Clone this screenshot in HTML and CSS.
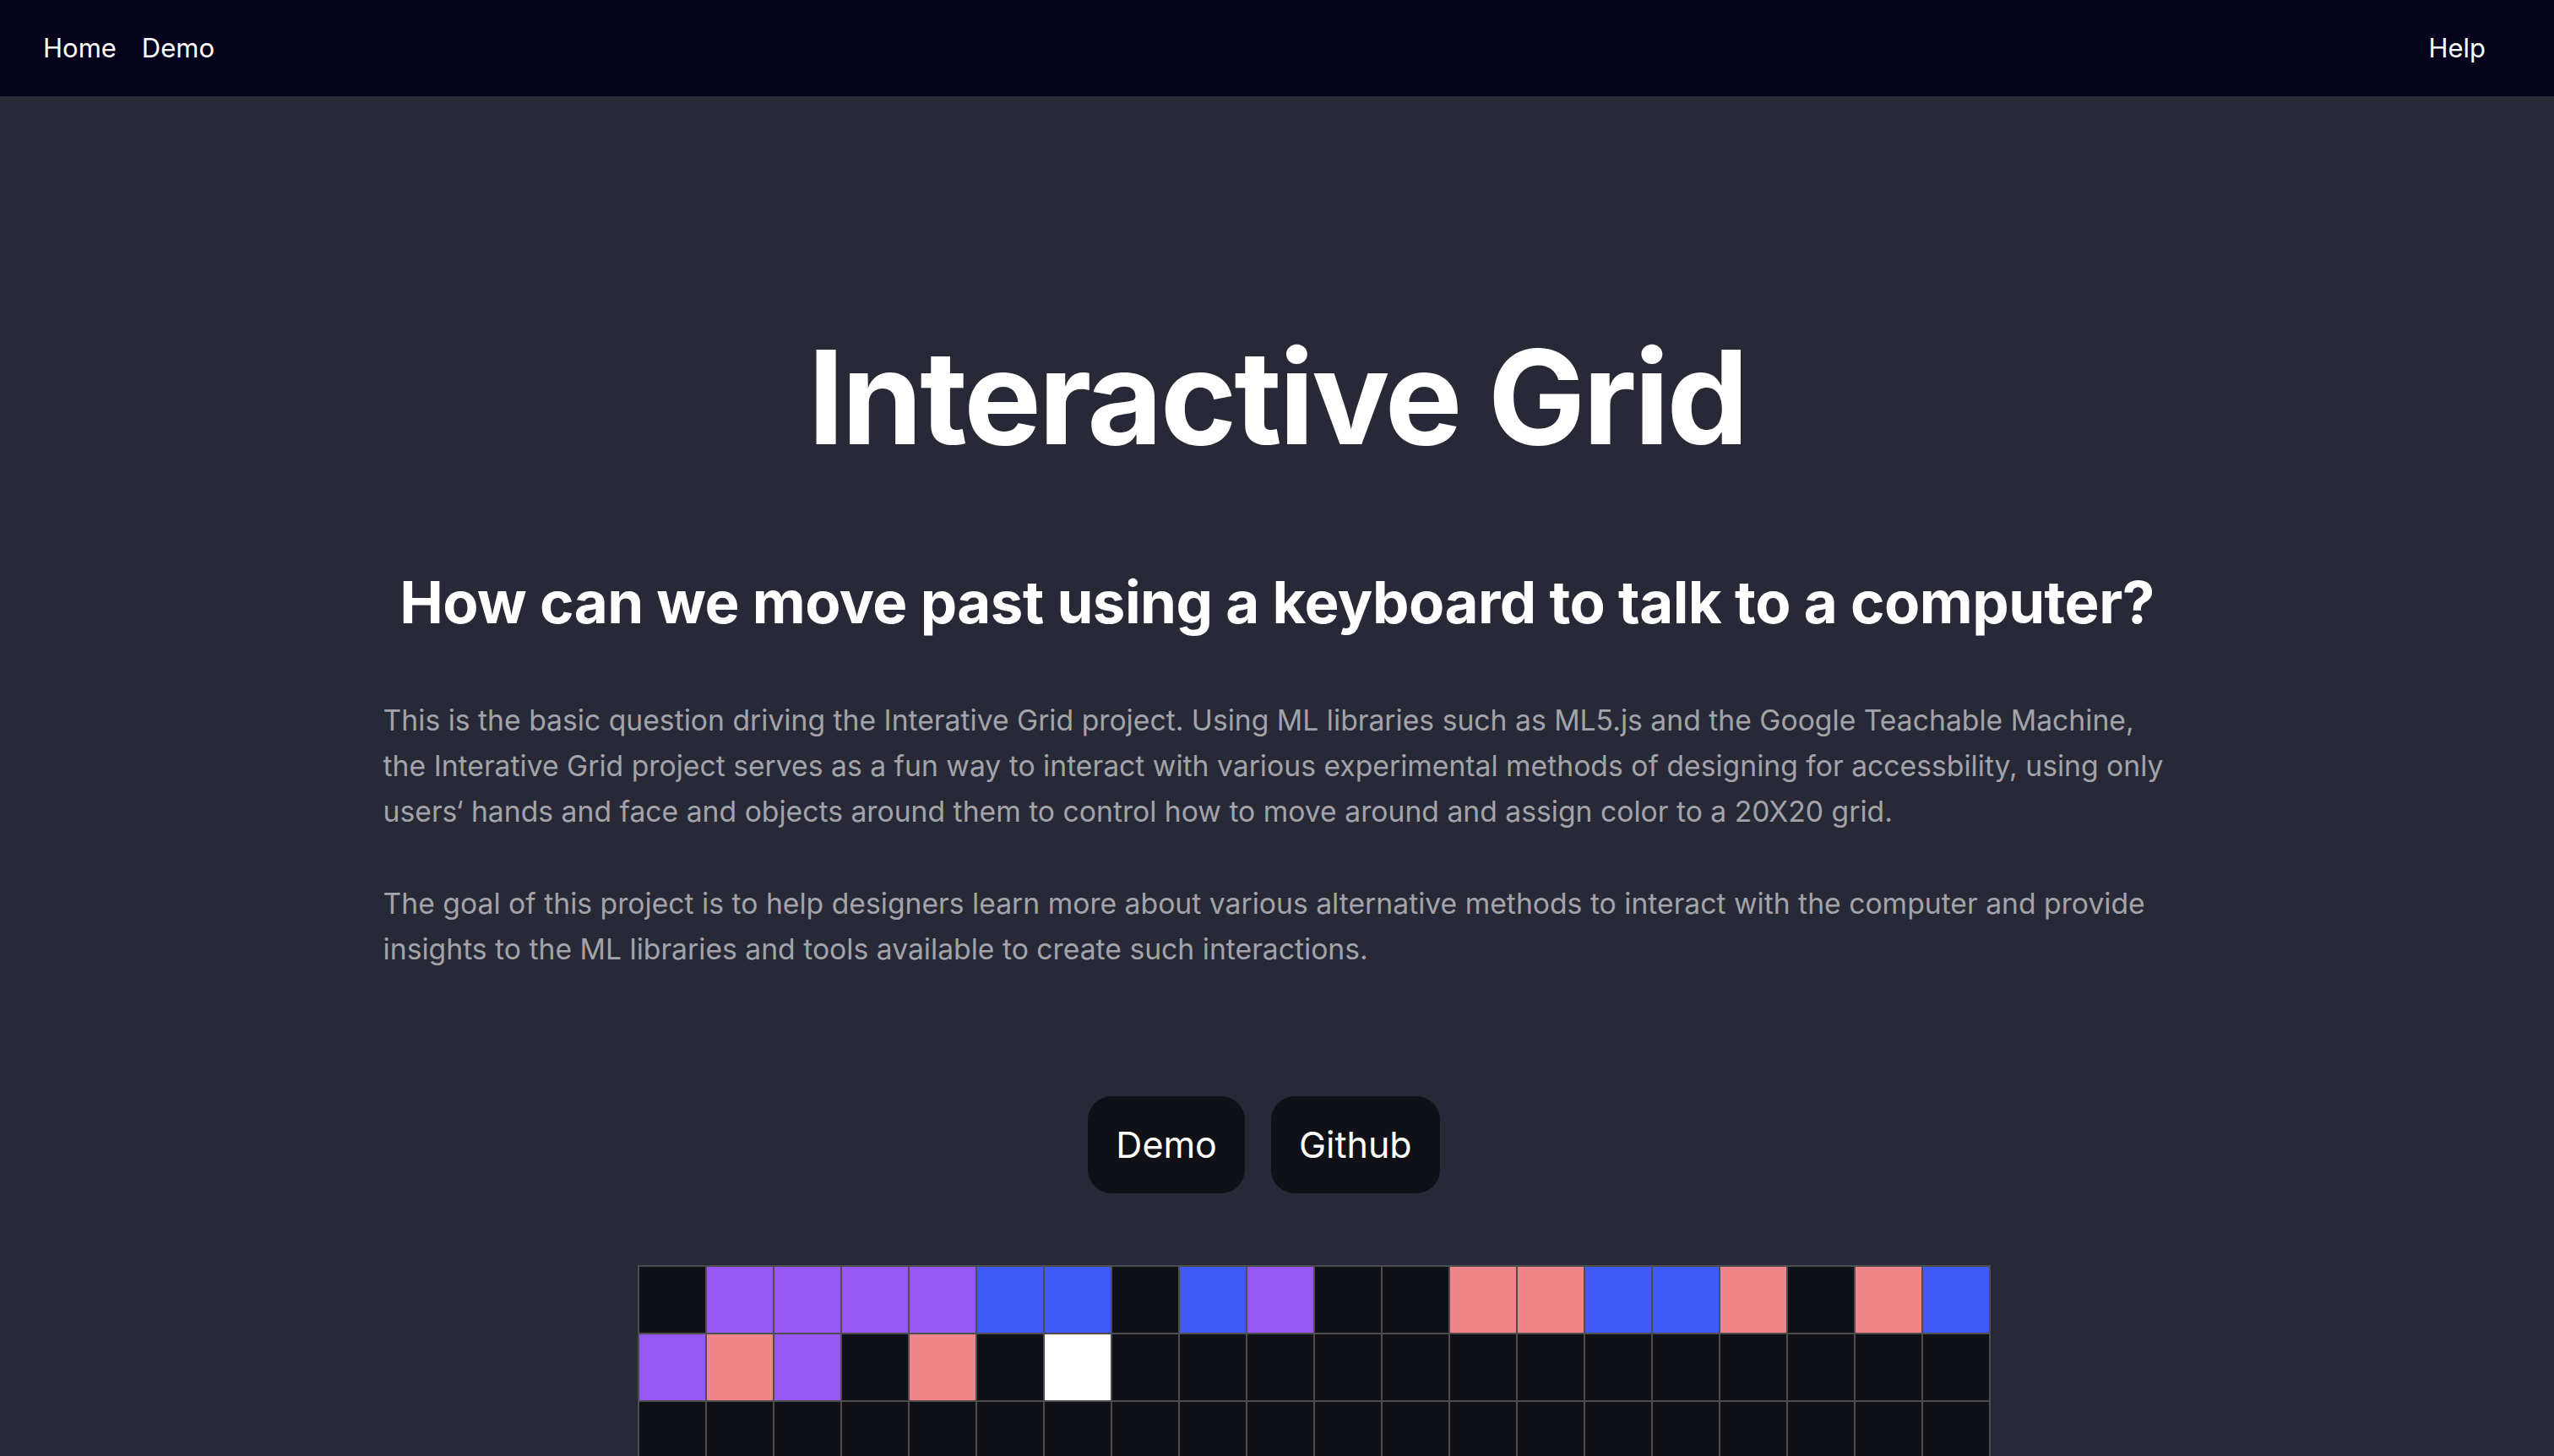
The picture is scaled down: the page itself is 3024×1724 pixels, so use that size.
FILE: index.html
```html
<!DOCTYPE html>
<html lang="en">
<head>
<meta charset="utf-8">
<title>Interactive Grid</title>
<link rel="stylesheet" href="styles.css">
</head>
<body>
<nav class="nav">
  <div class="nav-left">
    <a class="nav-link" href="#">Home</a>
    <a class="nav-link" href="#">Demo</a>
  </div>
  <a class="nav-link" href="#">Help</a>
</nav>
<main class="main">
  <h1 class="title">Interactive Grid</h1>
  <h2 class="subtitle">How can we move past using a keyboard to talk to a computer?</h2>
  <div class="copy">
    <p class="para">This is the basic question driving the Interative Grid project. Using ML libraries such as ML5.js and the Google Teachable Machine, the Interative Grid project serves as a fun way to interact with various experimental methods of designing for accessbility, using only users‘ hands and face and objects around them to control how to move around and assign color to a 20X20 grid.</p>
    <p class="para">The goal of this project is to help designers learn more about various alternative methods to interact with the computer and provide insights to the ML libraries and tools available to create such interactions.</p>
  </div>
  <div class="buttons">
    <a class="btn" href="#">Demo</a>
    <a class="btn" href="#">Github</a>
  </div>
  <div class="grid-wrap">
    <div class="grid" id="grid"></div>
  </div>
</main>
<script src="script.js"></script>
</body>
</html>
```
FILE: styles.css
```css
* { box-sizing: border-box; }
html, body { margin: 0; padding: 0; }
body {
  background: #272936;
  font-family: Inter, "Noto Sans", sans-serif;
  color: #ffffff;
}
.nav {
  height: 114px;
  background: #05031c;
  display: flex;
  align-items: center;
  justify-content: space-between;
  padding: 0 81px 0 51px;
}
.nav-left { display: flex; gap: 30px; }
.nav-link {
  color: #ffffff;
  text-decoration: none;
  font-size: 31px;
  line-height: 40px;
}
.main { text-align: center; padding-bottom: 200px; }
.title {
  font-size: 154px;
  font-weight: 700;
  line-height: 1.2;
  margin: 264px 0 0;
  letter-spacing: -0.02em;
}
.subtitle {
  font-size: 69px;
  font-weight: 700;
  line-height: 1.2;
  margin: 109px 0 0;
  letter-spacing: -0.55px;
}
.copy {
  width: 70%;
  margin: 71px auto 0;
  text-align: left;
}
.para {
  font-size: 33.7px;
  line-height: 54px;
  color: #a3a3aa;
  margin: 0 0 55px;
}
.para:last-child { margin-bottom: 0; }
.buttons {
  display: flex;
  justify-content: center;
  margin-top: 147px;
}
.btn {
  height: 115px;
  padding: 0 33px;
  display: flex;
  align-items: center;
  background: #0f1117;
  color: #ffffff;
  text-decoration: none;
  font-size: 43px;
  border-radius: 28px;
  margin-right: 31px;
}
.grid-wrap {
  display: flex;
  justify-content: center;
  margin-top: 85px;
}
.grid {
  margin-left: 87px;
  display: grid;
  grid-template-columns: repeat(20, 80px);
  border: 1px solid #4d4d4f;
}
.cell {
  width: 80px;
  height: 80px;
  border: 1px solid #4d4d4f;
  background: #101116;
}
.c-p { background: #9657f3; }
.c-b { background: #3f5af6; }
.c-r { background: #ee8689; }
.c-w { background: #ffffff; }
```
FILE: script.js
```js
(function () {
  var rows = [
    "kppppbbkbpkkrrbbrkrb",
    "prpkrkwkkkkkkkkkkkkk"
  ];
  var grid = document.getElementById("grid");
  var map = { k: "", p: "c-p", b: "c-b", r: "c-r", w: "c-w" };
  for (var r = 0; r < 20; r++) {
    for (var c = 0; c < 20; c++) {
      var d = document.createElement("div");
      var ch = rows[r] ? rows[r][c] : "k";
      d.className = "cell" + (map[ch] ? " " + map[ch] : "");
      grid.appendChild(d);
    }
  }
})();
```
